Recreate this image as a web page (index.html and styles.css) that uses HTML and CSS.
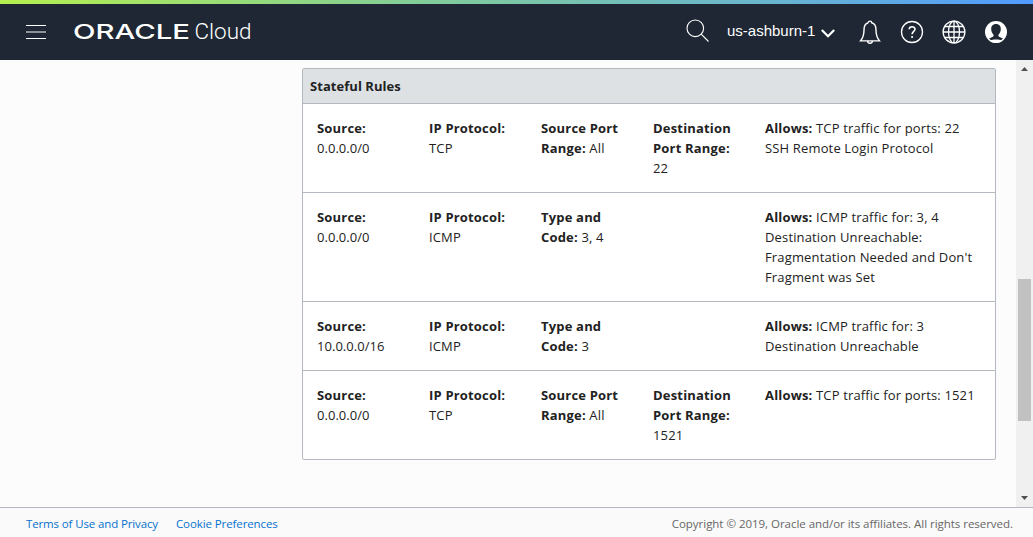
FILE: index.html
```html
<!DOCTYPE html>
<html lang="en">
<head>
<meta charset="utf-8">
<title>Oracle Cloud</title>
<link rel="stylesheet" href="styles.css">
</head>
<body>
<div class="accent"></div>
<header class="topbar">
  <div class="menu"><span></span><span class="dim"></span><span></span></div>
  <svg class="brand" width="180" height="26" viewBox="0 0 180 26">
    <text class="oracle" x="-1" y="20" textLength="117" lengthAdjust="spacingAndGlyphs">ORACLE</text>
    <text class="cloud" x="120.500" y="20" textLength="57" lengthAdjust="spacingAndGlyphs">Cloud</text>
  </svg>
  <div class="tools">
    <svg class="search" width="24" height="24" viewBox="0 0 24 24"><circle cx="9.3" cy="9.3" r="8.3"/><path d="M15.2 15.2L22.5 22.5"/></svg>
    <div class="region">us-ashburn-1</div>
    <svg class="chevron" width="14" height="9" viewBox="0 0 14 9"><path d="M.8 1L7 7.2L13.2 1"/></svg>
    <svg class="bell" width="22" height="24" viewBox="0 0 22 24"><path d="M9.3 2.8C9.3 .5 12.7 .5 12.7 2.8C16.200 3.700 17 6.500 17 10C17 15 18 18 20.500 20.900H1.500C4 18 5 15 5 10C5 6.500 5.800 3.700 9.300 2.800M8.600 21.200C8.900 24 13.100 24 13.400 21.200"/></svg>
    <svg class="help" width="24" height="24" viewBox="0 0 24 24"><circle cx="12" cy="12" r="10.500"/><path class="mark" d="M9.200 9.300C9.200 5.800 15 5.900 15 9.200C15 11.300 12.100 11.500 12.100 14.200"/><circle class="dot" cx="12.100" cy="17" r="1.100"/></svg>
    <svg class="globe" width="26" height="24" viewBox="0 0 26 24"><circle cx="13" cy="12" r="10.900"/><ellipse cx="13" cy="12" rx="5.500" ry="10.900"/><path d="M13 1V23M2 12H24M4 6.500H22M4 17.500H22"/></svg>
    <svg class="user" width="24" height="24" viewBox="0 0 24 24"><circle class="disc" cx="12" cy="12" r="11"/><path class="person" d="M12 4C15.300 4 17 6.300 16.800 9.300C16.700 11.800 15.700 13.700 14.300 14.900C14.200 16.700 16.300 17.400 19 18.500C15.500 22.200 8.500 22.200 5 18.500C7.700 17.400 9.800 16.700 9.700 14.900C8.300 13.700 7.300 11.800 7.200 9.300C7 6.300 8.700 4 12 4Z"/><path class="disc" d="M5.800 20.700C9 19.200 15 19.200 18.200 20.700C15 23.600 9 23.600 5.800 20.700Z"/></svg>
  </div>
</header>
<main class="content">
  <div class="page">
    <section class="rules">
      <h2>Stateful Rules</h2>
      <div class="row">
        <div><b>Source:</b><br><span class="address">0.0.0.0/0</span></div>
        <div><b>IP Protocol:</b><br>TCP</div>
        <div><b>Source Port<br>Range:</b> All</div>
        <div><b>Destination<br>Port Range:</b><br>22</div>
        <div><b>Allows:</b> TCP traffic for ports: 22<br>SSH Remote Login Protocol</div>
      </div>
      <div class="row">
        <div><b>Source:</b><br><span class="address">0.0.0.0/0</span></div>
        <div><b>IP Protocol:</b><br>ICMP</div>
        <div><b>Type and<br>Code:</b> 3, 4</div>
        <div></div>
        <div><b>Allows:</b> ICMP traffic for: 3, 4<br>Destination Unreachable:<br>Fragmentation Needed and Don't<br>Fragment was Set</div>
      </div>
      <div class="row">
        <div><b>Source:</b><br><span class="address">10.0.0.0/16</span></div>
        <div><b>IP Protocol:</b><br>ICMP</div>
        <div><b>Type and<br>Code:</b> 3</div>
        <div></div>
        <div><b>Allows:</b> ICMP traffic for: 3<br>Destination Unreachable</div>
      </div>
      <div class="row">
        <div><b>Source:</b><br><span class="address">0.0.0.0/0</span></div>
        <div><b>IP Protocol:</b><br>TCP</div>
        <div><b>Source Port<br>Range:</b> All</div>
        <div><b>Destination<br>Port Range:</b><br>1521</div>
        <div><b>Allows:</b> TCP traffic for ports: 1521</div>
      </div>
    </section>
  </div>
  <div class="scrollbar">
    <svg width="7" height="4" viewBox="0 0 7 4"><path d="M0 4L3.500 0L7 4Z"/></svg>
    <div class="thumb"></div>
    <svg class="down" width="7" height="4" viewBox="0 0 7 4"><path d="M0 0L3.500 4L7 0Z"/></svg>
  </div>
</main>
<footer class="footer">
  <a class="terms">Terms of Use and Privacy</a>
  <a class="cookies">Cookie Preferences</a>
  <span class="copyright">Copyright © 2019, Oracle and/or its affiliates. All rights reserved.</span>
</footer>
</body>
</html>
```
FILE: styles.css
```css
* { box-sizing: border-box; }
body {
  margin: 0;
  height: 537px;
  display: flex;
  flex-direction: column;
  overflow: hidden;
  background: #fcfcfc;
  color: #222;
  font-family: "Open Sans", "Noto Sans", sans-serif;
  font-size: 13px;
  line-height: 20px;
}
.accent { height: 4px; flex: none; background: linear-gradient(90deg, #b5ef4e, #83cd98 40%, #68b4cf 75%, #519bff); }
.topbar {
  height: 56px;
  flex: none;
  display: flex;
  align-items: flex-start;
  padding-left: 26px;
  background: #1e2733;
}
.menu { width: 20px; padding-top: 21px; display: flex; flex-direction: column; gap: 5px; }
.menu span { height: 1px; background: #fff; }
.menu .dim { height: 2px; background: #8e9399; }
.brand { margin: 15px 0 0 28px; overflow: visible; }
.brand text { fill: #fff; }
.oracle { font: 500 20.500px Inter, sans-serif; }
.cloud { font: 300 22px Roboto, sans-serif; }
.tools { display: flex; margin-left: 432px; }
.tools svg { flex: none; fill: none; stroke: #fff; }
.search { margin-top: 15px; stroke-width: 1.100; }
.region { width: 91px; margin: 17px 1px 0 17px; font: 15px/20px "Liberation Sans", sans-serif; color: #fff; white-space: nowrap; }
.tools .chevron { margin: 25px 0 0 2px; stroke-width: 2.200; }
.tools .bell { margin: 16px 0 0 24px; stroke-width: 1.400; }
.tools .help { margin: 16px 0 0 19px; stroke-width: 1.300; }
.help .mark { stroke-width: 1.600; }
.help .dot { fill: #fff; stroke: none; }
.tools .globe { margin: 16px 0 0 17px; stroke-width: 1.300; }
.tools .user { margin: 16px 0 0 17px; stroke: none; }
.disc { fill: #fff; }
.person { fill: #1e2733; }
.content { flex: 1; min-height: 0; display: flex; }
.page { flex: 1; padding: 8px 20px 0 302px; }
.rules { border: 1px solid #b4b9c1; border-radius: 2px; background: #fff; }
.rules h2 { margin: 0; height: 34px; padding: 7px; font-size: 13px; line-height: 20px; font-weight: 700; letter-spacing: .05px; background: #dde1e4; }
.row { display: grid; grid-template-columns: repeat(4, 112px) 1fr; padding: 14px; border-top: 1px solid #b4b9c1; white-space: nowrap; letter-spacing: .15px; }
b { font-weight: 700; letter-spacing: .18px; }
.address { letter-spacing: .04px; }
.scrollbar { width: 17px; padding: 7px 0; display: flex; flex-direction: column; align-items: center; background: #f0f0f0; }
.scrollbar svg { fill: #505050; }
.thumb { width: 13px; height: 142px; margin-top: 208px; background: #c1c1c1; }
.down { margin-top: auto; }
.footer { height: 30px; flex: none; display: flex; padding: 6px 20px 0 26px; border-top: 1px solid #b4b9c1; font-size: 11.500px; background: #fafafa; }
.footer a { color: #0572ce; }
.terms { letter-spacing: -.13px; }
.cookies { margin-left: 18px; letter-spacing: -.1px; }
.copyright { margin-left: auto; color: #666; letter-spacing: -.03px; }
```
